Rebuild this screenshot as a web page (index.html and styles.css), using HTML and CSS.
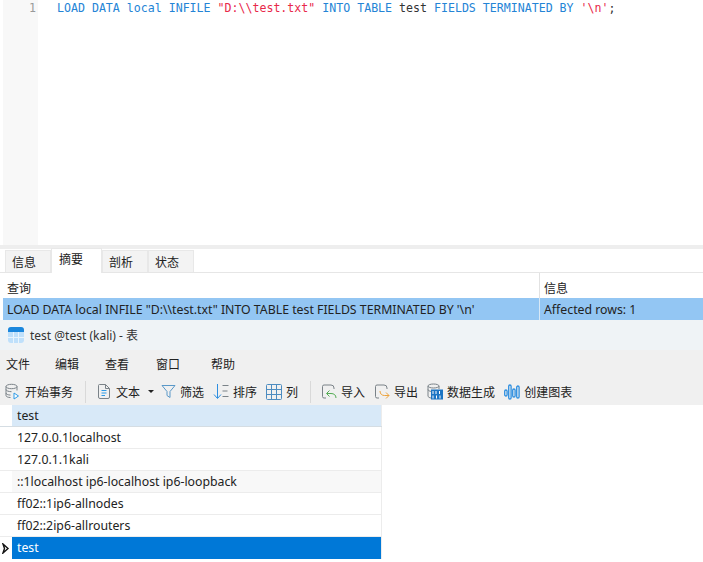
FILE: index.html
```html
<!DOCTYPE html>
<html lang="zh">
<head>
<meta charset="utf-8">
<title>test @test (kali) - 表</title>
<link rel="stylesheet" href="styles.css">
</head>
<body>
<section class="editor">
  <div class="gutter"><span class="lineno">1</span></div>
  <pre class="code"><span class="kw">LOAD DATA local INFILE</span> <span class="str">"D:\\test.txt"</span> <span class="kw">INTO TABLE</span> <span class="id">test</span> <span class="kw">FIELDS TERMINATED BY</span> <span class="str">'\n'</span><span class="id">;</span></pre>
</section>
<div class="splitter"></div>
<nav class="tabs">
  <span class="tab">信息</span>
  <span class="tab tab-active">摘要</span>
  <span class="tab">剖析</span>
  <span class="tab">状态</span>
</nav>
<div class="result-head">
  <div class="col-query">查询</div>
  <div class="col-info">信息</div>
</div>
<div class="result-row">
  <div class="col-query">LOAD DATA local INFILE "D:\\test.txt" INTO TABLE test FIELDS TERMINATED BY '\n'</div>
  <div class="col-info">Affected rows: 1</div>
</div>
<header class="titlebar">
  <svg class="app-icon" width="16" height="16" viewBox="0 0 16 16"><rect x="0" y="0" width="16" height="16" rx="3" fill="#bfe0fb"/><path d="M0 5V3a3 3 0 0 1 3-3h10a3 3 0 0 1 3 3v2z" fill="#1a86dc"/><path d="M5.500 5v11M10.500 5v11M0 10.500h16" stroke="#e9f5fe" stroke-width="1"/></svg>
  <span>test @test (kali) - 表</span>
</header>
<div class="menubar">
  <span class="menu m1">文件</span><span class="menu m2">编辑</span><span class="menu m3">查看</span><span class="menu m4">窗口</span><span class="menu">帮助</span>
</div>
<div class="toolbar">
  <span class="tool"><svg width="16" height="17" viewBox="0 0 16 17" fill="none" stroke="#7a8288"><ellipse cx="6.500" cy="3.500" rx="5.500" ry="2.200"/><path d="M1 3.500v9c0 1.200 2 2 4.500 2M12 3.500v4M1 6.500c0 1.200 2.500 2.200 5.500 2.200M1 10c0 1.200 2 2 4.500 2.100"/><path d="M9 10v6l4.500-3z" stroke="#2e9be6" fill="#fff"/></svg>开始事务</span>
  <span class="sep"></span>
  <span class="tool t-text"><svg width="14" height="17" viewBox="0 0 14 17" fill="none" stroke="#7a8288"><path d="M2.500 1.500h6l4 4v8.500a1.500 1.500 0 0 1-1.500 1.500H3a1.500 1.500 0 0 1-1.500-1.500V2.500a1 1 0 0 1 1-1zM8.500 1.500v4h4"/><path d="M4.500 7.500h5M4.500 10h5M4.500 12.500h3.500" stroke="#2e9be6"/></svg>文本<i class="caret"></i></span>
  <span class="tool t-next"><svg width="15" height="15" viewBox="0 0 15 15" fill="none" stroke="#5a98c8"><path d="M1 1.500h13L9 7.500v6l-3-2v-4z"/></svg>筛选</span>
  <span class="tool t-next"><svg width="16" height="17" viewBox="0 0 16 17" fill="none"><path d="M4.500 1v14M1 11.500l3.500 4 3.500-4" stroke="#2e8fe0"/><path d="M9.500 2.500h6M9.500 8h5M9.500 13.500h6" stroke="#7a8288"/></svg>排序</span>
  <span class="tool"><svg width="16" height="16" viewBox="0 0 16 16" fill="none" stroke="#4d8cc0"><rect x="0.500" y="0.500" width="15" height="15" rx="1"/><path d="M5.500 1v14M10.500 1v14M1 5.500h14M1 10.500h14"/></svg>列</span>
  <span class="sep sep2"></span>
  <span class="tool t-next"><svg width="16" height="17" viewBox="0 0 16 17" fill="none"><path d="M5 15H3a1.500 1.500 0 0 1-1.500-1.500v-10A1.500 1.500 0 0 1 3 2h7a3 3 0 0 1 3 3v1" stroke="#7a8288"/><path d="M15 15c0-3-2-4.500-5-4.500H6M8.500 7.500l-3 3 3 3" stroke="#55ad55"/></svg>导入</span>
  <span class="tool t-next"><svg width="16" height="17" viewBox="0 0 16 17" fill="none"><path d="M5 15H3a1.500 1.500 0 0 1-1.500-1.500v-10A1.500 1.500 0 0 1 3 2h7a3 3 0 0 1 3 3v1" stroke="#7a8288"/><path d="M6 8c0 3 2 4.500 4.500 4.500H15M12 9.500l3 3-3 3" stroke="#eda33c"/></svg>导出</span>
  <span class="tool t-next"><svg width="16" height="17" viewBox="0 0 16 17" fill="none"><ellipse cx="6.500" cy="3" rx="5.500" ry="2" stroke="#7a8288"/><path d="M1 3v10c0 1 1.500 1.800 3 2M12 3v3M1 6.500c0 1 1.500 1.800 3.500 2" stroke="#7a8288"/><rect x="4" y="6.500" width="12" height="10" fill="#1b75c4"/><path d="M6 8v3M9 8v3M12.500 8v3M6 12.500v3M9.500 12.500v3M13 12.500v3" stroke="#fff"/></svg>数据生成</span>
  <span class="tool"><svg width="16" height="16" viewBox="0 0 16 16" fill="none" stroke="#2e8fe0" stroke-width="1.300"><rect x="0.700" y="6" width="2.400" height="6" rx="1.200"/><rect x="4.700" y="1" width="2.400" height="14" rx="1.200"/><rect x="8.700" y="5" width="2.400" height="8" rx="1.200"/><rect x="12.700" y="2" width="2.400" height="12" rx="1.200"/></svg>创建图表</span>
</div>
<section class="grid">
  <div class="row row-head"><div class="ind"></div><div class="cell">test</div></div>
  <div class="row"><div class="ind"></div><div class="cell">127.0.0.1localhost</div></div>
  <div class="row"><div class="ind"></div><div class="cell">127.0.1.1kali</div></div>
  <div class="row row-alt"><div class="ind"></div><div class="cell">::1localhost ip6-localhost ip6-loopback</div></div>
  <div class="row"><div class="ind"></div><div class="cell">ff02::1ip6-allnodes</div></div>
  <div class="row"><div class="ind"></div><div class="cell">ff02::2ip6-allrouters</div></div>
  <div class="row row-sel"><div class="ind"><svg width="8" height="11" viewBox="0 0 8 11" fill="#fff" stroke="#111" stroke-width="1.400"><path d="M1 1l5 4.500-5 4.500 1.500-4.500z"/></svg></div><div class="cell">test</div></div>
</section>
</body>
</html>
```

FILE: styles.css
```css
html, body {
  margin: 0;
  padding: 0;
  background: #fff;
}
body {
  width: 703px;
  height: 562px;
  overflow: hidden;
  font-family: "Noto Sans", "Noto Sans CJK SC", sans-serif;
  font-size: 12px;
  color: #222;
}
.editor {
  display: flex;
  height: 245px;
}
.gutter {
  box-sizing: border-box;
  width: 35px;
  margin-left: 3px;
  background: #f8f8f8;
}
.lineno {
  display: block;
  width: 33px;
  text-align: right;
  font: 11.600px/16px "DejaVu Sans Mono", monospace;
  color: #999;
}
.code {
  margin: 0;
  padding-left: 19px;
  font: 11.600px/16px "DejaVu Sans Mono", monospace;
}
.kw { color: #2484d6; }
.str { color: #e8284a; }
.id { color: #333; }
.splitter {
  height: 4px;
  background: #eeeeee;
}
.tabs {
  display: flex;
  align-items: flex-end;
  height: 24px;
  padding-left: 5px;
  box-sizing: border-box;
  border-bottom: 1px solid #e6e6e6;
}
.tab {
  box-sizing: border-box;
  width: 46px;
  height: 22px;
  padding-left: 6px;
  line-height: 24px;
  background: #f3f3f3;
  border: 1px solid #e8e8e8;
  border-bottom: 0;
}
.tab-active {
  width: 51px;
  height: 25px;
  padding-left: 7px;
  line-height: 21px;
  margin-bottom: -1px;
  background: #fff;
}
.result-head {
  display: flex;
  height: 25px;
  line-height: 32px;
}
.col-query {
  box-sizing: border-box;
  width: 539px;
  padding-left: 7px;
  white-space: nowrap;
  overflow: hidden;
}
.col-info {
  flex: 1;
  padding-left: 4px;
  border-left: 1px solid #e2e2e2;
}
.result-row {
  display: flex;
  height: 22px;
  line-height: 23px;
  margin-left: 3px;
  background: #93c6f3;
  font-size: 12.300px;
}
.result-row .col-query {
  width: 536px;
  padding-left: 4px;
}
.result-row .col-info {
  border-left-color: #d8e8f6;
}
.titlebar {
  display: flex;
  align-items: center;
  gap: 6px;
  height: 30px;
  padding: 0 0 0 8px;
  background: #eff3f6;
  color: #333;
}
.app-icon {
  flex: none;
}
.menubar {
  display: flex;
  align-items: center;
  height: 28px;
  padding-left: 6px;
  background: #f0f0f0;
}
.menu { display: block; }
.m1 { margin-right: 25px; }
.m2 { margin-right: 26px; }
.m3 { margin-right: 27px; }
.m4 { margin-right: 31px; }
.toolbar {
  display: flex;
  align-items: center;
  height: 27px;
  padding-left: 5px;
  background: #f0f0f0;
}
.tool {
  display: flex;
  align-items: center;
  gap: 4px;
}
.tool svg { flex: none; }
.sep {
  width: 1px;
  height: 22px;
  background: #d9d9d9;
  margin: 0 11px 0 12px;
}
.sep2 { margin: 0 10px 0 12px; }
.t-text { gap: 5px; margin-right: 7px; }
.caret {
  width: 0;
  height: 0;
  margin-left: 3px;
  border: 3px solid transparent;
  border-top: 3px solid #222;
  border-bottom: 0;
}
.t-next { margin-right: 9px; }
.grid {
  width: 382px;
}
.row {
  display: flex;
  height: 22px;
  box-sizing: border-box;
  border-bottom: 1px solid #ececec;
}
.ind {
  width: 12px;
  flex: none;
  display: flex;
  align-items: center;
  padding-left: 2px;
  box-sizing: border-box;
}
.cell {
  flex: 1;
  padding-left: 5px;
  line-height: 22px;
  border-right: 1px solid #ececec;
  white-space: nowrap;
  overflow: hidden;
  font-size: 12.300px;
}
.row-head .cell {
  background: #d8e9f8;
}
.row-head { border-bottom-color: #d5dde3; }
.row-alt .cell { background: #f8f8f8; }
.row-sel { border-bottom: 0; }
.row-sel .cell {
  background: #0078d7;
  color: #fff;
}
```
